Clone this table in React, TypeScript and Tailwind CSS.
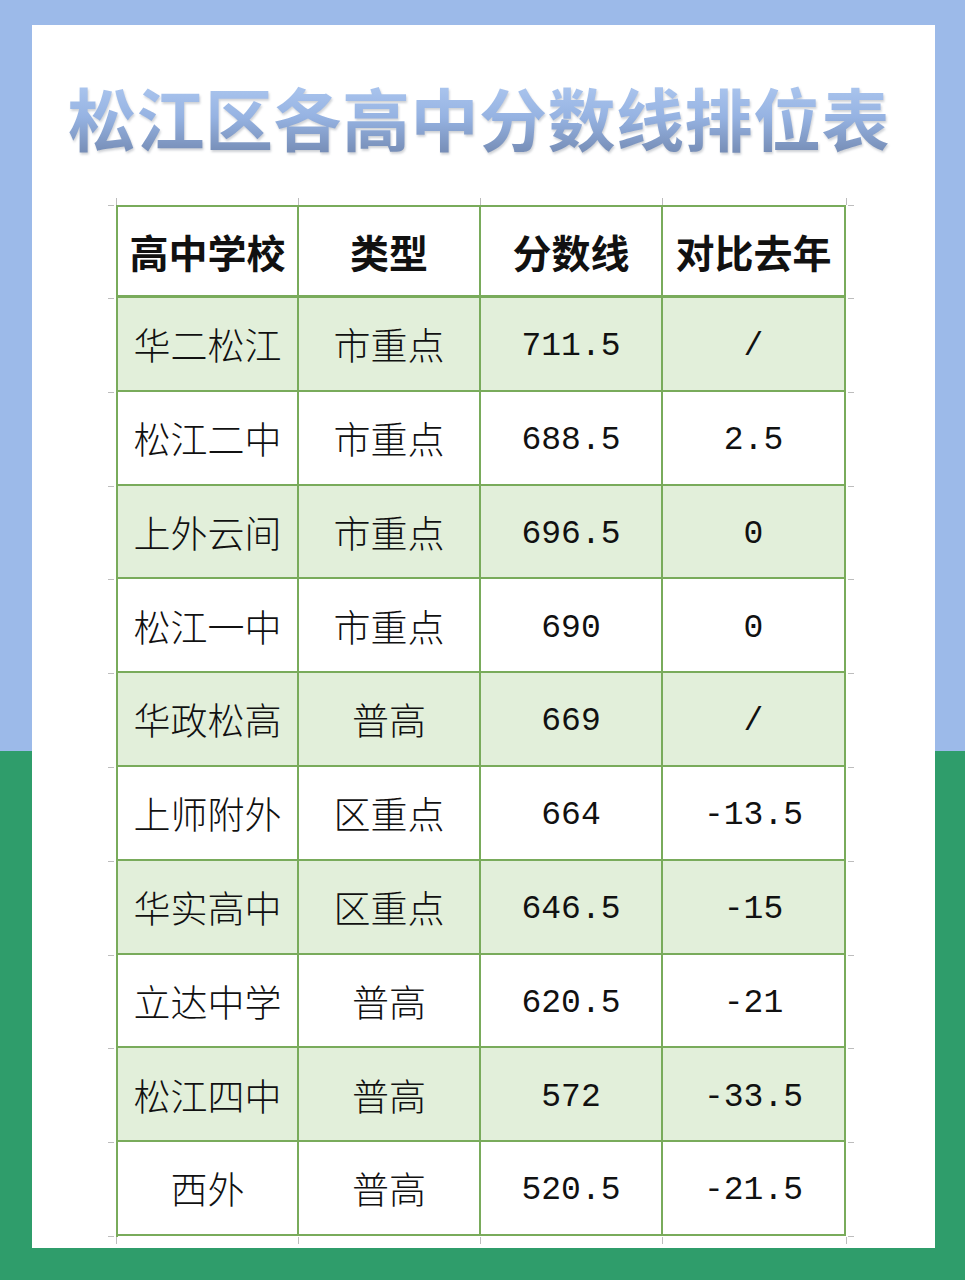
const rows = [
  ["华二松江", "市重点", "711.5", "/"],
  ["松江二中", "市重点", "688.5", "2.5"],
  ["上外云间", "市重点", "696.5", "0"],
  ["松江一中", "市重点", "690", "0"],
  ["华政松高", "普高", "669", "/"],
  ["上师附外", "区重点", "664", "-13.5"],
  ["华实高中", "区重点", "646.5", "-15"],
  ["立达中学", "普高", "620.5", "-21"],
  ["松江四中", "普高", "572", "-33.5"],
  ["西外", "普高", "520.5", "-21.5"],
];

const headers = ["高中学校", "类型", "分数线", "对比去年"];

// grey excel-like gridline ticks sticking out of the table
function SideTicks({ side }: { side: "left" | "right" }) {
  const line = side === "left" ? "self-start" : "self-end";
  return (
    <div className="flex flex-col w-[8px]">
      <div className={"h-[93px] w-[6px] border-t border-[#bdbdbd] " + line} />
      {rows.map((_, i) => (
        <div key={i} className={"h-[93.8px] w-[6px] border-t border-[#bdbdbd] " + line} />
      ))}
      <div className={"h-0 w-[6px] border-t border-[#bdbdbd] " + line} />
    </div>
  );
}

function EdgeTicks() {
  return (
    <div className="grid grid-cols-[182px_182px_182px_183px] h-[7px] w-[731px] border-r border-[#bdbdbd]">
      <div className="border-l border-[#bdbdbd]" />
      <div className="border-l border-[#bdbdbd]" />
      <div className="border-l border-[#bdbdbd]" />
      <div className="border-l border-[#bdbdbd]" />
    </div>
  );
}

function App() {
  return (
    <div className="w-[965px] h-[1280px] bg-[linear-gradient(#9cbae9_0px,#9cbae9_751px,#2f9d6b_751px)] pt-[25px] pl-[32px]">
      <div className="w-[903px] h-[1223px] bg-white flex flex-col">
        <div className="mt-[44px] ml-[36px] w-fit font-['Noto_Sans_CJK_SC','Noto_Sans',sans-serif] text-[68px] leading-[96px] font-bold tracking-[0.5px] bg-linear-to-b from-[#b5cef4] via-[#96b3e2] to-[#6c81a8] bg-clip-text text-transparent drop-shadow-[1px_2px_1px_rgba(60,70,90,0.25)]">
          松江区各高中分数线排位表
        </div>

        <div className="mt-[33px] ml-[76px] flex flex-col">
          <div className="ml-[8px]">
            <EdgeTicks />
          </div>
          <div className="flex">
            <SideTicks side="left" />
            <div className="w-[730px] border-l-2 border-t-2 border-[#79ab5b]">
              <div className="grid grid-cols-[181px_182px_182px_183px]">
                {headers.map((h) => (
                  <div
                    key={h}
                    className="h-[91px] flex items-center justify-center border-r-2 border-b-[3px] border-[#79ab5b] font-['Noto_Sans_CJK_SC',sans-serif] text-[39px] font-bold text-[#111]"
                  >
                    {h}
                  </div>
                ))}
                {rows.map((r, i) =>
                  r.map((c, j) => (
                    <div
                      key={i + "-" + j}
                      className={
                        "h-[93.8px] flex items-center justify-center border-r-2 border-b-2 border-[#79ab5b] text-[#111] " +
                        (i % 2 === 0 ? "bg-[#e2efda] " : "bg-white ") +
                        (j < 2
                          ? "font-['Noto_Sans_CJK_SC',sans-serif] text-[37px] font-light pt-[2px]"
                          : "font-['Liberation_Mono',monospace] text-[33px] pt-[6px]")
                      }
                    >
                      {c}
                    </div>
                  ))
                )}
              </div>
            </div>
            <SideTicks side="right" />
          </div>
          <div className="ml-[8px]">
            <EdgeTicks />
          </div>
        </div>
      </div>
    </div>
  );
}

export default App;
